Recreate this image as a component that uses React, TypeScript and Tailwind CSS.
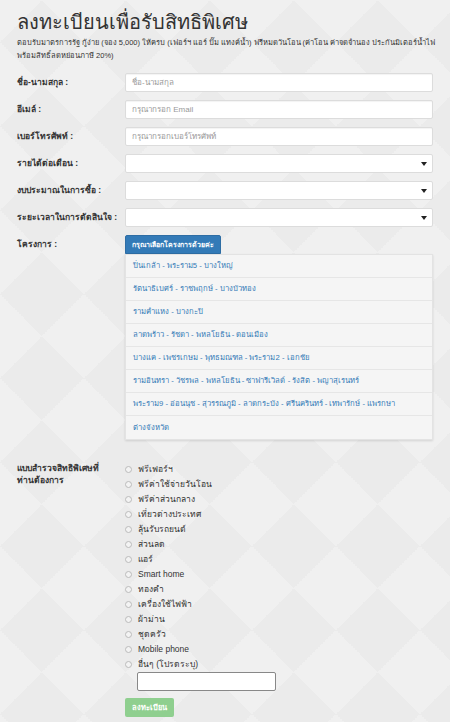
import React from "react";

const projects = [
  "ปิ่นเกล้า - พระราม5 - บางใหญ่",
  "รัตนาธิเบศร์ - ราชพฤกษ์ - บางบัวทอง",
  "รามคำแหง - บางกะปิ",
  "ลาดพร้าว - รัชดา - พหลโยธิน - ดอนเมือง",
  "บางแค - เพชรเกษม - พุทธมณฑล - พระราม2 - เอกชัย",
  "รามอินทรา - วัชรพล - พหลโยธิน - ซาฟารีเวิลด์ - รังสิต - พญาสุเรนทร์",
  "พระราม9 - อ่อนนุช - สุวรรณภูมิ - ลาดกระบัง - ศรีนครินทร์ - เทพารักษ์ - แพรกษา",
  "ต่างจังหวัด",
];

const perks = [
  "ฟรีเฟอร์ฯ",
  "ฟรีค่าใช้จ่ายวันโอน",
  "ฟรีค่าส่วนกลาง",
  "เที่ยวต่างประเทศ",
  "ลุ้นรับรถยนต์",
  "ส่วนลด",
  "แอร์",
  "Smart home",
  "ทองคำ",
  "เครื่องใช้ไฟฟ้า",
  "ผ้าม่าน",
  "ชุดครัว",
  "Mobile phone",
  "อื่นๆ (โปรดระบุ)",
];

function Row({ label, children }: { label: string; children: React.ReactNode }) {
  return (
    <div className="grid min-h-[19px] grid-cols-[108px_308px]">
      <label className="h-[19px] whitespace-nowrap pt-[3px] text-[8.5px] font-bold leading-[12px] text-[#333]">
        {label}
      </label>
      <div>{children}</div>
    </div>
  );
}

function TextField({ placeholder }: { placeholder: string }) {
  return (
    <input
      placeholder={placeholder}
      className="block h-[19px] w-full rounded-[2px] border border-[#dcdcdc] bg-white px-[6px] text-[8px] leading-[17px] text-[#555] shadow-[inset_0_1px_1px_rgba(0,0,0,0.05)] placeholder:text-[#999] focus:outline-none"
    />
  );
}

function SelectField() {
  return (
    <div className="relative h-[19px] w-full rounded-[2px] border border-[#dcdcdc] bg-white">
      <span className="absolute right-[5px] top-[7px] h-0 w-0 border-x-[3px] border-t-[4px] border-x-transparent border-t-[#222]" />
    </div>
  );
}

export default function App() {
  return (
    <div
      className="h-[722px] w-[450px] overflow-hidden bg-[#ebebeb] bg-[linear-gradient(45deg,rgba(255,255,255,0.25)_25%,transparent_25%,transparent_75%,rgba(255,255,255,0.25)_75%),linear-gradient(-45deg,rgba(255,255,255,0.25)_25%,transparent_25%,transparent_75%,rgba(255,255,255,0.25)_75%)] bg-[length:84px_84px] px-[17px] pt-[8px] text-[#333]"
      style={{ fontFamily: '"Liberation Sans", "Noto Sans", Tahoma, sans-serif' }}
    >
      <h1 className="h-[28px] text-[20px] leading-[28px] text-[#333]">ลงทะเบียนเพื่อรับสิทธิพิเศษ</h1>
      <p className="h-[26px] text-[7.5px] leading-[13px] text-[#333]">
        <span className="block whitespace-nowrap">
          ตอบรับมาตรการรัฐ กู้ง่าย (จอง 5,000) ให้ครบ (เฟอร์ฯ แอร์ ปั๊ม แทงค์น้ำ) ฟรีหมดวันโอน (ค่าโอน ค่าจดจำนอง ประกันมิเตอร์น้ำไฟ
        </span>
        <span className="block whitespace-nowrap">พร้อมสิทธิ์ลดหย่อนภาษี 20%)</span>
      </p>

      <div className="mt-[11px] flex flex-col gap-[8px]">
        <Row label="ชื่อ-นามสกุล :">
          <TextField placeholder="ชื่อ-นามสกุล" />
        </Row>
        <Row label="อีเมล์ :">
          <TextField placeholder="กรุณากรอก Email" />
        </Row>
        <Row label="เบอร์โทรศัพท์ :">
          <TextField placeholder="กรุณากรอกเบอร์โทรศัพท์" />
        </Row>
        <Row label="รายได้ต่อเดือน :">
          <SelectField />
        </Row>
        <Row label="งบประมาณในการซื้อ :">
          <SelectField />
        </Row>
        <Row label="ระยะเวลาในการตัดสินใจ :">
          <SelectField />
        </Row>
        <Row label="โครงการ :">
          <div>
            <button className="block h-[19px] rounded-t-[2px] border border-[#2e6da4] bg-[#337ab7] px-[6px] text-[7px] font-bold leading-[17px] text-white">
              กรุณาเลือกโครงการด้วยค่ะ
            </button>
            <ul className="border border-[#e3e3e3] bg-[#f5f5f5] shadow-[0_1px_2px_rgba(0,0,0,0.12)]">
              {projects.map((p, i) => (
                <li
                  key={i}
                  className="flex h-[23px] items-center overflow-hidden whitespace-nowrap border-b border-[#e6e6e6] px-[7px] text-[7.7px] text-[#337ab7] last:border-b-0"
                >
                  {p}
                </li>
              ))}
            </ul>
          </div>
        </Row>
      </div>

      <div className="mt-[22px] grid grid-cols-[108px_308px]">
        <div className="h-[24px] pr-[10px] text-[8.5px] font-bold leading-[12px]">แบบสำรวจสิทธิพิเศษที่ท่านต้องการ</div>
        <div>
          {perks.map((p, i) => (
            <label key={i} className="flex h-[15px] items-center gap-[6px] overflow-hidden whitespace-nowrap text-[8.5px] leading-[15px] text-[#333]">
              <span className="h-[7px] w-[7px] shrink-0 rounded-full border border-[#bbb] bg-[#f3f3f3]" />
              {p}
            </label>
          ))}
          <input className="ml-[12px] block h-[19px] w-[139px] rounded-[2px] border border-[#888] bg-white" />
          <button className="mt-[7px] block h-[19px] w-[49px] rounded-[2px] bg-[#8fcf8f] text-[7.5px] font-bold leading-[19px] text-white">
            ลงทะเบียน
          </button>
        </div>
      </div>
    </div>
  );
}
